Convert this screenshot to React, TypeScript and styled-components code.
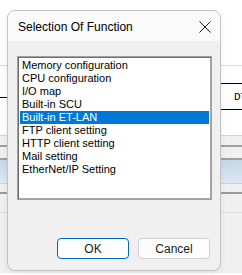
import styled, { createGlobalStyle } from "styled-components";

const GlobalStyle = createGlobalStyle`
  html, body {
    margin: 0;
    padding: 0;
    background: #ffffff;
  }
  * {
    box-sizing: border-box;
  }
`;

const FUNCTIONS = [
  "Memory configuration",
  "CPU configuration",
  "I/O map",
  "Built-in SCU",
  "Built-in ET-LAN",
  "FTP client setting",
  "HTTP client setting",
  "Mail setting",
  "EtherNet/IP Setting",
];

App.displayName = "App";
export default function App() {
  const selected = 4;

  return (
    <Screen>
      <GlobalStyle />
      <Band $h={65} $bg="#ffffff" />
      <Band $h={1} $bg="#d9d9d9" />
      <TableRow>
        <LeftCell />
        <RightCell>
          <CellText>DTIME</CellText>
        </RightCell>
      </TableRow>
      <Band $h={1} $bg="#d4d4d4" />
      <Band $h={9} $bg="#f0f0f0" />
      <Band $h={2} $bg="#a0a0a0" />
      <Band $h={11} $bg="#f0f0f0" />
      <Band $h={2} $bg="#a0a0a0" />
      <Band $h={23} $bg="linear-gradient(#c6d7e9, #dce7f3)" />
      <Band $h={1} $bg="#d0d0d0" />
      <Band $h={8} $bg="#f0f0f0" />
      <Band $h={2} $bg="#9a9a9a" />
      <Band $h={18} $bg="#f0f0f0" />
      <Band $h={1} $bg="#dedede" />
      <Band $h={60} $bg="#f0f0f0" />

      <Dialog>
        <TitleBar>
          <Title>Selection Of Function</Title>
          <CloseButton>
            <svg width="12" height="12" viewBox="0 0 12 12">
              <path
                d="M0.5 0.5 L11.5 11.5 M11.5 0.5 L0.5 11.5"
                stroke="#1a1a1a"
                strokeWidth="1"
                fill="none"
              />
            </svg>
          </CloseButton>
        </TitleBar>
        <Body>
          <ListBox>
            {FUNCTIONS.map((item, index) => (
              <ListItem key={index} $selected={index === selected}>
                {item}
              </ListItem>
            ))}
          </ListBox>
          <ButtonRow>
            <Button $primary>OK</Button>
            <Button>Cancel</Button>
          </ButtonRow>
        </Body>
      </Dialog>
    </Screen>
  );
}

const Screen = styled.div`
  position: relative;
  width: 242px;
  height: 275px;
  overflow: hidden;
  display: flex;
  flex-direction: column;
  background: #ffffff;
`;

const Band = styled.div<{ $h: number; $bg: string }>`
  flex: none;
  height: ${(p) => p.$h}px;
  background: ${(p) => p.$bg};
`;

const TableRow = styled.div`
  flex: none;
  height: 69px;
  display: flex;
  justify-content: space-between;
  background: #ffffff;
`;

const LeftCell = styled.div`
  width: 20px;
  margin-top: 31px;
  height: 1px;
  background: #000000;
`;

const RightCell = styled.div`
  width: 21px;
  margin-top: 17px;
  height: 27px;
  border-top: 1px solid #000000;
  border-bottom: 1px solid #000000;
  padding-left: 13px;
  overflow: hidden;
  white-space: nowrap;
  display: flex;
  align-items: center;
`;

const CellText = styled.span`
  font-family: "Liberation Mono", monospace;
  font-size: 11px;
  color: #000000;
`;

const Dialog = styled.div`
  position: absolute;
  left: 7px;
  top: 10px;
  width: 214px;
  height: 261px;
  border: 1px solid #c3c3c3;
  border-radius: 8px;
  overflow: hidden;
  display: flex;
  flex-direction: column;
  background: #f0f0f0;
  box-shadow: 0 2px 6px rgba(0, 0, 0, 0.08);
`;

const TitleBar = styled.div`
  flex: none;
  height: 30px;
  display: flex;
  align-items: center;
  justify-content: space-between;
  padding: 0 9px 0 10px;
  background: #fafafa;
`;

const Title = styled.span`
  font-family: "Liberation Sans", Arial, sans-serif;
  font-size: 12px;
  color: #000000;
  margin-top: 1px;
`;

const CloseButton = styled.div`
  width: 12px;
  height: 12px;
  display: flex;
  margin-top: 1px;
`;

const Body = styled.div`
  flex: 1;
  display: flex;
  flex-direction: column;
  padding: 15px 8px 11px 9px;
`;

const ListBox = styled.div`
  height: 144px;
  background: #ffffff;
  border: 1px solid #a0a0a0;
  box-shadow: inset 1px 1px 0 #6e6e6e, inset -1px -1px 0 #a8a8a8;
  padding: 2px 2px;
  display: flex;
  flex-direction: column;
`;

const ListItem = styled.div<{ $selected?: boolean }>`
  height: 13px;
  line-height: 13px;
  padding-left: 2px;
  font-family: "Liberation Sans", Arial, sans-serif;
  font-size: 11px;
  white-space: nowrap;
  color: ${(p) => (p.$selected ? "#ffffff" : "#000000")};
  background: ${(p) => (p.$selected ? "#0078d7" : "transparent")};
`;

const ButtonRow = styled.div`
  margin-top: auto;
  display: flex;
  justify-content: flex-end;
  gap: 9px;
  padding-right: 2px;
`;

const Button = styled.div<{ $primary?: boolean }>`
  width: 72px;
  height: 21px;
  display: flex;
  align-items: center;
  justify-content: center;
  border-radius: 4px;
  background: #fdfdfd;
  border: 1px solid ${(p) => (p.$primary ? "#0067c0" : "#d0d0d0")};
  font-family: "Liberation Sans", Arial, sans-serif;
  font-size: 12px;
  color: #1a1a1a;
`;
